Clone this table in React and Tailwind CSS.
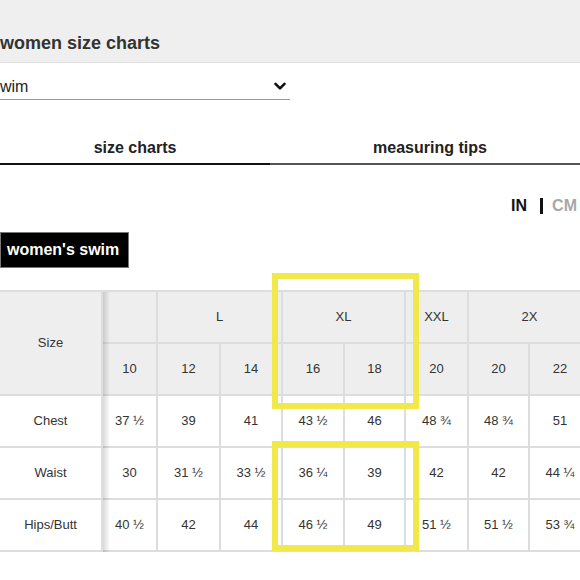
const headTop = [
  { label: "Size", cls: "row-span-2" },
  { label: "", cls: "" },
  { label: "L", cls: "col-span-2" },
  { label: "XL", cls: "col-span-2" },
  { label: "XXL", cls: "" },
  { label: "2X", cls: "col-span-2" },
];

const sizes = ["10", "12", "14", "16", "18", "20", "20", "22"];

const rows = [
  ["Chest", "37 ½", "39", "41", "43 ½", "46", "48 ¾", "48 ¾", "51"],
  ["Waist", "30", "31 ½", "33 ½", "36 ¼", "39", "42", "42", "44 ¼"],
  ["Hips/Butt", "40 ½", "42", "44", "46 ½", "49", "51 ½", "51 ½", "53 ¾"],
];

function Cell({ children, className = "" }) {
  return (
    <div className={`flex items-center justify-center border-r-2 border-b-2 border-[#dddddd] text-[13px] text-[#333] ${className}`}>
      {children}
    </div>
  );
}

export default function App() {
  return (
    <div className="relative w-[580px] h-[580px] overflow-hidden bg-white font-['Liberation_Sans',Arial,sans-serif]">
      {/* modal header */}
      <div className="h-[63px] bg-[#efefef] border-b border-[#e0e0e0] pt-[32px]">
        <h2 className="text-[18px] leading-[22px] font-bold text-[#333]">women size charts</h2>
      </div>

      {/* category select */}
      <div className="mt-[11px] w-[290px] h-[26px] border-b border-[#9a9a9a] flex items-center justify-between pr-[4px]">
        <span className="-ml-[8px] text-[16px] text-[#222]">swim</span>
        <svg width="12" height="9" viewBox="0 0 12 9" fill="none">
          <path d="M1.5 1.8 L6 6.3 L10.5 1.8" stroke="#111" strokeWidth="2.6" strokeLinecap="round" strokeLinejoin="round" />
        </svg>
      </div>

      {/* tabs */}
      <div className="mt-[36px] flex w-[590px]">
        <div className="w-[270px] text-center pb-[3px] border-b-2 border-[#111] text-[16px] leading-[24px] font-bold text-[#222]">
          size charts
        </div>
        <div className="flex-1 text-center pb-[3px] border-b-2 border-[#555] text-[16px] leading-[24px] font-bold text-[#222]">
          measuring tips
        </div>
      </div>

      {/* unit toggle */}
      <div className="mt-[29px] flex items-center justify-end pr-[3px] h-[24px] text-[16px] font-bold">
        <span className="text-[#111]">IN</span>
        <span className="ml-[13px] w-[3px] h-[16px] bg-[#111]"></span>
        <span className="ml-[9px] text-[#a8a8a8]">CM</span>
      </div>

      {/* tag */}
      <div className="mt-[14px] w-fit h-[36px] leading-[34px] pl-[6px] pr-[9px] bg-black border border-[#777] text-white text-[16px] font-bold">
        women's swim
      </div>

      {/* table */}
      <div className="relative mt-[22px] w-[592px] border-t-2 border-[#dddddd]">
        <div className="grid grid-cols-[103px_55px_63px_62px_62px_61px_63px_61px_62px] auto-rows-[52px]">
          {headTop.map((h, i) => (
            <Cell key={"h" + i} className={`bg-[#eeeeee] ${h.cls}`}>{h.label}</Cell>
          ))}
          {sizes.map((s, i) => (
            <Cell key={"s" + i} className="bg-[#eeeeee]">{s}</Cell>
          ))}
          {rows.map((r, ri) =>
            r.map((v, ci) => (
              <Cell key={ri + "-" + ci} className="bg-white">{v}</Cell>
            ))
          )}
        </div>
        {/* sticky column shadow */}
        <div className="absolute left-[103px] top-0 w-[7px] h-[260px] bg-gradient-to-r from-black/15 to-transparent"></div>
      </div>

      {/* highlight boxes */}
      <div className="absolute left-[272px] top-[273px] w-[147px] h-[136px] border-[6px] border-[#f1e94c]"></div>
      <div className="absolute left-[272px] top-[441px] w-[147px] h-[110px] border-[6px] border-[#f1e94c]"></div>
    </div>
  );
}
